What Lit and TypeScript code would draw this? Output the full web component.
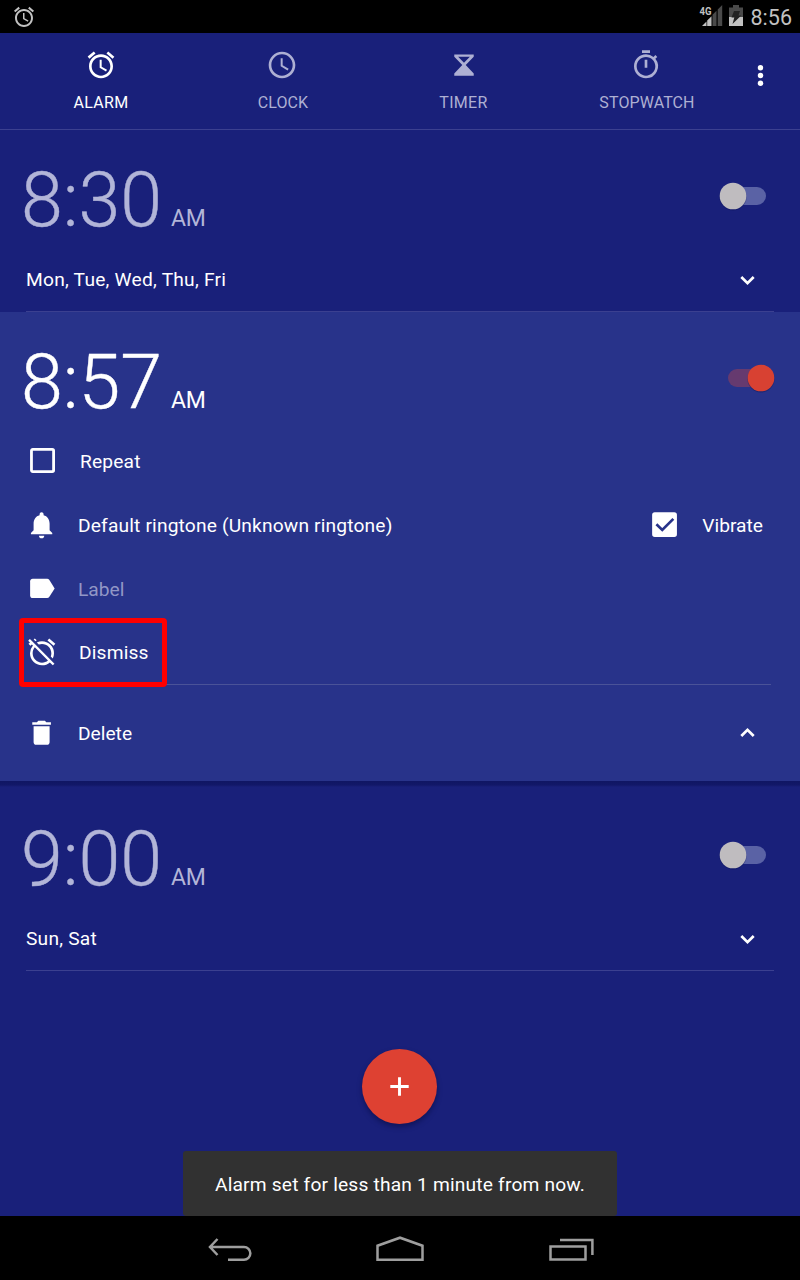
import { LitElement, html, css, svg } from "lit";
import { customElement, property } from "lit/decorators.js";

const glyphs: Record<string, unknown> = {
  alarm: svg`<path d="M22 5.72l-4.6-3.86-1.29 1.53 4.6 3.86L22 5.72zM7.88 3.39L6.6 1.86 2 5.71l1.29 1.53 4.59-3.85zM12.5 8H11v6l4.75 2.85.75-1.23-4-2.37V8zM12 4c-4.97 0-9 4.03-9 9s4.02 9 9 9c4.97 0 9-4.03 9-9s-4.03-9-9-9zm0 16c-3.87 0-7-3.13-7-7s3.13-7 7-7 7 3.13 7 7-3.13 7-7 7z"/>`,
  clock: svg`<path d="M12 2C6.5 2 2 6.5 2 12s4.500 10 10 10 10-4.500 10-10S17.500 2 12 2zm0 18c-4.410 0-8-3.590-8-8s3.590-8 8-8 8 3.590 8 8-3.590 8-8 8zM12.500 7H11v6l5.200 3.200.8-1.300-4.500-2.700V7z"/>`,
  timer: svg`<path fill-rule="evenodd" d="M4.700 4.100h14.600v1.700L13.300 12l6 6.300v1.700H4.700v-1.700l6-6.300-6-6.200zM7.600 5.800L12 10.400l4.400-4.600z"/>`,
  stopwatch: svg`<path d="M15 1H9v2h6V1zm-4 13h2V8h-2v6zm8.030-6.610l1.420-1.420c-.43-.51-.9-.99-1.410-1.410l-1.420 1.420A8.962 8.962 0 0 0 12 4c-4.970 0-9 4.030-9 9s4.020 9 9 9a8.994 8.994 0 0 0 7.030-14.610zM12 20c-3.870 0-7-3.130-7-7s3.130-7 7-7 7 3.130 7 7-3.130 7-7 7z"/>`,
  bell: svg`<path d="M11.700 22c1.100 0 2-.9 2-2h-4c0 1.100.89 2 2 2zm6-6v-5c0-3.070-1.640-5.640-4.500-6.320V4c0-.83-.67-1.500-1.500-1.500s-1.500.67-1.500 1.500v.68C7.330 5.360 5.700 7.920 5.700 11v5l-2 2v1h16v-1l-2-2z"/>`,
  label: svg`<path d="M17.400 5.100C17 4.600 16.500 4.300 15.900 4.300L5 4.300C3.900 4.300 3.100 5.100 3.100 6.200v10.600c0 1.100.8 2 1.900 2h10.900c.6 0 1.100-.3 1.500-.8L21.500 11.600z"/>`,
  alarmOff: svg`<path d="M12 6c3.870 0 7 3.130 7 7 0 .84-.16 1.650-.43 2.400l1.520 1.520c.58-1.190.91-2.510.91-3.920a9 9 0 0 0-9-9c-1.410 0-2.730.33-3.920.91L9.600 6.430C10.350 6.160 11.160 6 12 6zm10-.28l-4.600-3.860-1.290 1.530 4.600 3.860L22 5.720zM2.920 2.290L1.650 3.570 2.980 4.900l-1.110.93 1.420 1.420 1.110-.94.8.8A8.964 8.964 0 0 0 3 13c0 4.970 4.020 9 9 9 2.250 0 4.310-.83 5.890-2.200l2.200 2.200 1.270-1.270L3.890 3.270l-.97-.98zm13.550 16.100C15.260 19.390 13.700 20 12 20c-3.870 0-7-3.130-7-7 0-1.700.61-3.260 1.610-4.470l9.860 9.860zM8.020 3.280L6.600 1.860l-.86.71 1.420 1.420.86-.71z"/>`,
  trash: svg`<path d="M5.700 18.900c0 1.100.9 2 2 2h8c1.100 0 2-.9 2-2V6.900H5.700v12zM18.700 3.900h-3.500l-1-1h-5l-1 1H4.700v2h14V3.900z"/>`,
  box: svg`<rect x="4.100" y="3.300" width="16.600" height="16.600" rx="1" fill="none" stroke="currentColor" stroke-width="2.100"/>`,
  checked: svg`<path d="M5.100 2.400h14.600a2 2 0 0 1 2 2v14.600a2 2 0 0 1-2 2H5.100a2 2 0 0 1-2-2V4.400a2 2 0 0 1 2-2z"/><path d="M6.300 11.500l4.400 4.200 8.300-8.300" fill="none" stroke="#28338a" stroke-width="2"/>`,
  down: svg`<path d="M7.200 10l4.800 4.800L16.800 10" fill="none" stroke="currentColor" stroke-width="2.100"/>`,
  up: svg`<path d="M7.200 14l4.800-4.800 4.800 4.800" fill="none" stroke="currentColor" stroke-width="2.100"/>`,
};

const icon = (name: string, size = 32) =>
  html`<svg class="icon ${name}" width=${size} height=${size} viewBox="0 0 24 24" fill="currentColor">${glyphs[name]}</svg>`;

@customElement("alarm-card")
class AlarmCard extends LitElement {
  @property() time = "";
  @property() days = "";
  @property({ type: Boolean, reflect: true }) on = false;

  static styles = css`
    :host { display: block; color: #fff; }
    :host([on]) { background: #28338a; }
    svg { display: block; flex: none; }
    .head { display: flex; height: 117px; padding: 0 25px 0 21px; box-sizing: border-box; color: #b2b5d8; }
    :host([on]) .head { color: #fff; }
    .clock { display: flex; align-items: baseline; flex: 1; padding-top: 26px; }
    .time { font-size: 75.300px; line-height: 88px; font-weight: 300; -webkit-text-stroke: 0.4px currentColor; }
    .ampm { font-size: 23px; margin-left: 9px; letter-spacing: -0.4px; }
    .switch { margin-top: 48px; }
    .row { display: flex; align-items: center; height: 64px; padding: 0 26px 0 25.500px; box-sizing: border-box; font-size: 19.200px; letter-spacing: 0.160px; }
    .row .text { flex: 1; padding-left: 20.500px; white-space: nowrap; }
    .row .repeat { padding-left: 22.500px; }
    .dismiss .text { padding-left: 21.500px; }
    .days { padding-left: 26px; }
    .days .text { padding-left: 0; letter-spacing: 0.230px; }
    .chevron { margin-right: 11px; }
    .line { height: 1px; margin: 0 26px; background: #3b4090; }
    .row .hint { color: #9297c6; letter-spacing: 0; }
    .inner { background: #4a5398; margin: 0 29px 0 26px; }
    .row.dismiss { height: 63px; padding-bottom: 1px; padding-top: 1px; }
    .row.dismiss .alarmOff { margin-bottom: 2px; }
    .row.delete { height: 96px; letter-spacing: 0; }
    .vibrate { display: flex; align-items: center; gap: 22px; margin-right: 11px; letter-spacing: 0; }
  `;

  private toggle() {
    const track = this.on ? "#663a6f" : "#5a62a5";
    const knob = this.on ? "#d84132" : "#bfbcbf";
    const x = this.on ? 42 : 14;
    return html`<svg class="switch" width="56" height="36" viewBox="0 0 56 36">
      <rect x="9" y="9" width="38" height="18" rx="9" fill=${track} />
      <circle cx=${x} cy="19" r="13.500" fill="#0a1250" opacity="0.35" />
      <circle cx=${x} cy="18" r="13.300" fill=${knob} />
    </svg>`;
  }

  private details() {
    return html`
      <div class="row">${icon("box")}<span class="text repeat">Repeat</span></div>
      <div class="row">
        ${icon("bell")}<span class="text">Default ringtone (Unknown ringtone)</span>
        <span class="vibrate">${icon("checked")}<span>Vibrate</span></span>
      </div>
      <div class="row">${icon("label")}<span class="text hint">Label</span></div>
      <div class="row dismiss">${icon("alarmOff")}<span class="text">Dismiss</span></div>
      <div class="line inner"></div>
      <div class="row delete">${icon("trash")}<span class="text">Delete</span><span class="chevron">${icon("up", 31)}</span></div>
    `;
  }

  render() {
    return html`
      <div class="head">
        <div class="clock"><span class="time">${this.time}</span><span class="ampm">AM</span></div>
        ${this.toggle()}
      </div>
      ${this.on
        ? this.details()
        : html`<div class="row days"><span class="text">${this.days}</span><span class="chevron">${icon("down", 31)}</span></div>
            <div class="line"></div>`}
    `;
  }
}

@customElement("app-root")
class AppRoot extends LitElement {
  static styles = css`
    :host { display: block; font-family: Roboto, sans-serif; }
    svg { display: block; flex: none; }
    .screen { position: relative; display: flex; flex-direction: column; width: 800px; height: 1280px; background: #19207a; color: #fff; overflow: hidden; }
    .status { display: flex; align-items: center; height: 33px; padding: 0 8px 0 12px; background: #000; color: #c2c2c2; box-sizing: border-box; }
    .status .fill { flex: 1; }
    .status .now { font-size: 21.500px; line-height: 33px; padding-top: 2px; margin-left: 7px; }
    .tabs { display: flex; height: 97px; padding-left: 10px; box-sizing: border-box; border-bottom: 1px solid #3b4090; }
    .tab { display: flex; flex-direction: column; align-items: center; width: 182px; padding-top: 15.500px; box-sizing: border-box; color: #aeb0d3; font-size: 16px; letter-spacing: 0.1px; }
    .tab.active { color: #fff; letter-spacing: 0.3px; }
    .tab .clock, .tab .timer, .tab .stopwatch { margin-right: 3px; }
    .tab span { line-height: 20px; margin-top: 12.500px; }
    .tab:nth-child(3) span { margin-right: 3px; letter-spacing: 0.3px; }
    .more { margin-top: 30px; margin-left: 17px; }
    .gap { height: 8px; background: linear-gradient(#101663, #121868 4px, #19207a 6px); }
    .fab { align-self: center; margin: 78px 1px 0 0; width: 75px; height: 75px; border-radius: 50%; background: #de4132; display: flex; align-items: center; justify-content: center; box-shadow: 0 3px 5px rgba(5, 10, 60, 0.5); }
    .toast { align-self: center; margin-top: 27px; width: 434px; height: 65px; line-height: 67px; box-sizing: border-box; border-radius: 3px; background: #313131; text-align: center; font-size: 19.200px; letter-spacing: 0.180px; white-space: nowrap; }
    .nav { height: 64px; background: #000; }
    .mark { position: absolute; left: 19px; top: 618px; width: 148px; height: 69px; box-sizing: border-box; border: 5px solid #f00; border-radius: 4px; }
  `;

  render() {
    const tabs = [["alarm", "ALARM"], ["clock", "CLOCK"], ["timer", "TIMER"], ["stopwatch", "STOPWATCH"]];
    return html`
      <div class="screen">
        <div class="status">
          ${icon("alarm", 24)}
          <span class="fill"></span>
          <svg width="46" height="33" viewBox="698 0 46 33">
            <path d="M702 26l4.500-4.500V26z" fill="#c2c2c2" />
            <path d="M707.200 20.500l4.300-4.300V26h-4.300z" fill="#c2c2c2" />
            <path d="M712.500 14.800l4-4V26h-4zM717.700 9.500l4.500-4.500V26h-4.500z" fill="#4a4a4a" />
            <text x="699.500" y="15" font-size="11.500" font-weight="700" fill="#c2c2c2" textLength="12" lengthAdjust="spacingAndGlyphs">4G</text>
            <path d="M729 7.500h4V5h6v2.500h4V17h-14z" fill="#4a4a4a" />
            <path d="M729 17h14v9h-14z" fill="#c2c2c2" />
            <path d="M734 11h6l-1.500 4.500h2.700L732.500 24l1.800-6.500h-2.800z" fill="#222" />
          </svg>
          <span class="now">8:56</span>
        </div>
        <div class="tabs">
          ${tabs.map(([g, t], i) => html`<div class="tab ${i === 0 ? "active" : ""}">${icon(g)}<span>${t}</span></div>`)}
          <svg class="more" width="11" height="26" viewBox="0 0 11 26" fill="#fff">
            <circle cx="5.500" cy="4.800" r="2.700" /><circle cx="5.500" cy="12.500" r="2.700" /><circle cx="5.500" cy="20.300" r="2.700" />
          </svg>
        </div>
        <alarm-card time="8:30" days="Mon, Tue, Wed, Thu, Fri"></alarm-card>
        <alarm-card time="8:57" on></alarm-card>
        <div class="gap"></div>
        <alarm-card time="9:00" days="Sun, Sat"></alarm-card>
        <div class="fab">
          <svg width="19" height="19" viewBox="0 0 19 19"><path d="M9.500 .3v18.400M.3 9.500h18.400" stroke="#fff" stroke-width="2.900" /></svg>
        </div>
        <div class="toast">Alarm set for less than 1 minute from now.</div>
        <svg class="nav" width="800" height="64" viewBox="0 1216 800 64" fill="none" stroke="#9e9e9e" stroke-width="2.500">
          <path d="M217.500 1239l-7.500 8 7.500 8M210 1247h34a6.300 6.300 0 0 1 0 12.700h-16" />
          <path d="M377.500 1259.700v-14l22.500-8 22.500 8v14z" />
          <path d="M550.500 1246.600h35v13h-35zM560 1240h32.400v15" />
        </svg>
        <div class="mark"></div>
      </div>
    `;
  }
}
